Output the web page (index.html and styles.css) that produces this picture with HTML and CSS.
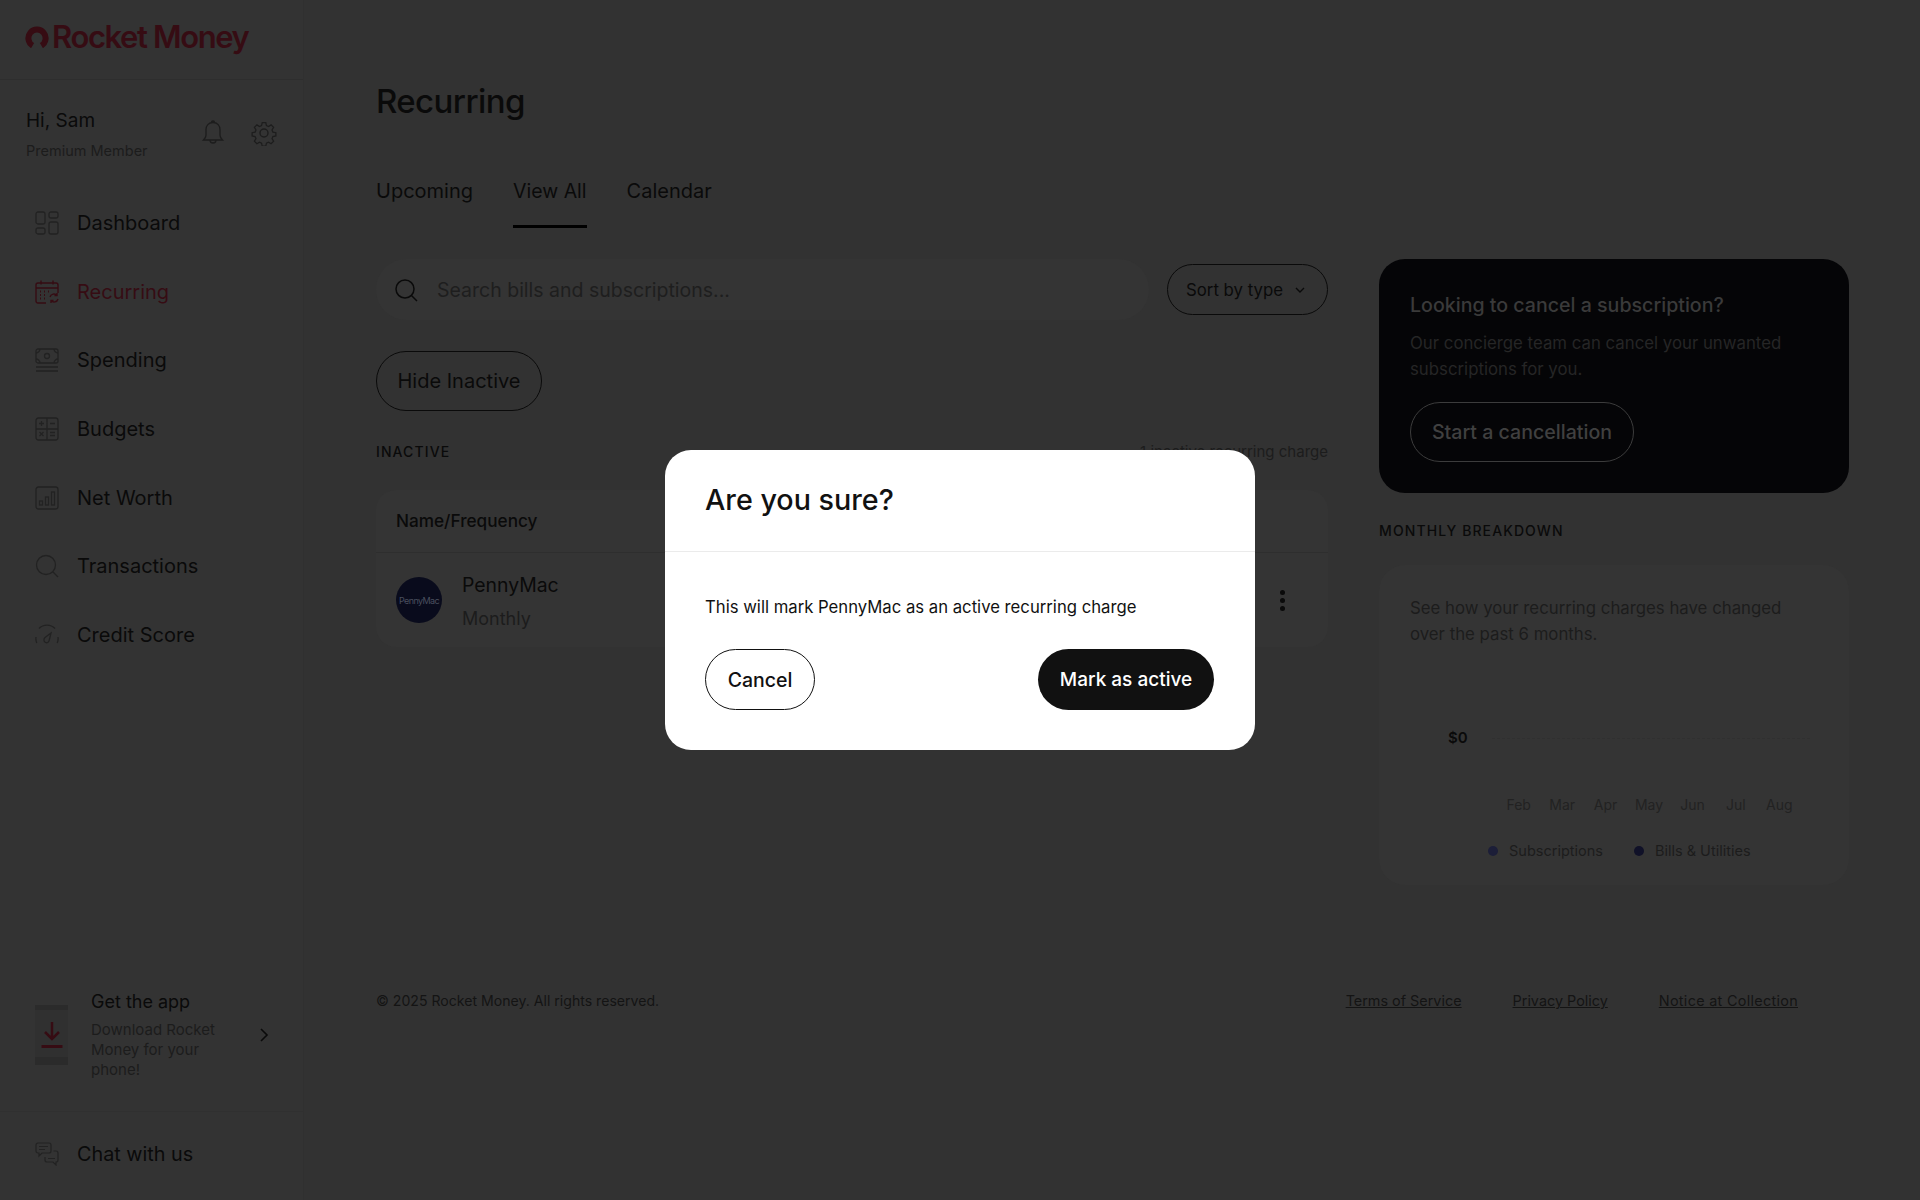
FILE: index.html
```html
<!DOCTYPE html>
<html lang="en">
<head>
    <meta charset="UTF-8">
    <meta name="viewport" content="width=device-width, initial-scale=1.0">
    <title>Recurring - Rocket Money</title>
    <link rel="stylesheet" href="styles.css">
</head>
<body>
    <div class="app">
        <aside class="sidebar">
            <div class="brand">
                <svg class="brand-mark" viewBox="0 0 24 22" width="24" height="22"><path d="M7.6 19.6A8.6 8.6 0 1 1 16.4 19.6" fill="none" stroke="#360c13" stroke-width="6"/></svg>
                <span class="brand-name">Rocket Money</span>
            </div>
            <div class="user">
                <div class="user-info">
                    <div class="user-name">Hi, Sam</div>
                    <div class="user-plan">Premium Member</div>
                </div>
                <svg class="user-icon" viewBox="0 0 24 28" width="26" height="28" fill="none" stroke="#1d1d1d" stroke-width="1.4"><path d="M12 3.5c-4.4 0-7 3.2-7 7.2v5.6c0 2-1.2 3.4-2.5 4.7h19c-1.3-1.3-2.5-2.7-2.5-4.7v-5.6c0-4-2.6-7.2-7-7.2zM10.5 3.5c0-2 3-2 3 0M9 21c0 4 6 4 6 0"/></svg>
                <svg class="user-icon user-gear" viewBox="0 0 26 26" width="26" height="26" fill="none" stroke="#1d1d1d" stroke-width="1.4"><circle cx="13" cy="13" r="4"/><path d="M11 1.500h4l.7 3.300 2.300 1 2.900-1.800 2.800 2.800-1.800 2.900 1 2.300 3.300.7v3.600l-3.300.7-1 2.300 1.800 2.900-2.800 2.800-2.900-1.800-2.300 1-.7 3.300h-4l-.7-3.300-2.300-1-2.900 1.800-2.800-2.800 1.800-2.900-1-2.300-3.300-.7v-3.600l3.300-.7 1-2.300-1.800-2.900 2.800-2.800 2.900 1.800 2.300-1z" transform="translate(1.300 1.300) scale(.9)"/></svg>
            </div>
            <nav class="nav">
                <a class="nav-item">
                    <svg class="nav-icon" viewBox="0 0 24 24" fill="none" stroke="#222" stroke-width="1.3"><rect x="1" y="1" width="9" height="12" rx="2"/><rect x="14" y="1" width="9" height="6" rx="2"/><rect x="1" y="17" width="9" height="6" rx="2"/><rect x="14" y="11" width="9" height="12" rx="2"/></svg>
                    Dashboard
                </a>
                <a class="nav-item nav-item-active">
                    <svg class="nav-icon" viewBox="0 0 24 24" fill="none" stroke="#360c13" stroke-width="1.400"><path d="M11 23H3a2 2 0 0 1-2-2V5a2 2 0 0 1 2-2h18a2 2 0 0 1 2 2v8M1 8h22M6 .5v4M18 .5v4"/><path d="M5 11.500h1M9 11.500h1M13 11.500h1M5 15h1M9 15h1M5 18.500h1M9 18.500h1" stroke-width="1.800"/><path d="M15 17a4 4 0 0 1 7-1.500M23 19a4 4 0 0 1-7 1.500M22 13v2.500h-2.500M16 23v-2.500h2.500"/></svg>
                    Recurring
                </a>
                <a class="nav-item">
                    <svg class="nav-icon" viewBox="0 0 24 24" fill="none" stroke="#222" stroke-width="1.300"><rect x="1" y="1" width="22" height="14" rx="2"/><circle cx="12" cy="8" r="2.500"/><path d="M1 5c2 0 4-2 4-4M23 5c-2 0-4-2-4-4M1 11c2 0 4 2 4 4M23 11c-2 0-4 2-4 4M1 19h22M1 23h22"/></svg>
                    Spending
                </a>
                <a class="nav-item">
                    <svg class="nav-icon" viewBox="0 0 24 24" fill="none" stroke="#222" stroke-width="1.300"><rect x="1" y="1" width="22" height="22" rx="2.500"/><path d="M12 1v22M1 12h22M6.500 4v5M4 6.500h5M15 6.500h5M4.500 15l4 4M8.500 15l-4 4M15 15.500h5M15 18.500h5"/></svg>
                    Budgets
                </a>
                <a class="nav-item">
                    <svg class="nav-icon" viewBox="0 0 24 24" fill="none" stroke="#222" stroke-width="1.300"><rect x="1" y="1" width="22" height="22" rx="2.500"/><rect x="4.500" y="15" width="3" height="4"/><rect x="10.500" y="11" width="3" height="8"/><rect x="16.500" y="6" width="3" height="13"/></svg>
                    Net Worth
                </a>
                <a class="nav-item">
                    <svg class="nav-icon" viewBox="0 0 24 24" fill="none" stroke="#222" stroke-width="1.300"><circle cx="11" cy="11" r="9.500"/><path d="M18 18l5 5"/></svg>
                    Transactions
                </a>
                <a class="nav-item">
                    <svg class="nav-icon" viewBox="0 0 24 24" fill="none" stroke="#222" stroke-width="1.300"><path d="M1.800 20a11 11 0 0 1-.8-6M4 5.500a11 11 0 0 1 16 0M23 14a11 11 0 0 1-.8 6"/><path d="M16 10l-6 4.500c-1.500 1.500-1.500 4 .5 5 2 .8 3.500-.5 3.800-2.500z"/></svg>
                    Credit Score
                </a>
            </nav>
            <div class="get-app">
                <div class="phone">
                    <svg viewBox="0 0 24 28" width="24" height="28" fill="none" stroke="#360c13" stroke-width="2.500"><path d="M12 2v17M5 12l7 7 7-7"/><path d="M1.500 26.500h21" stroke-width="3"/></svg>
                </div>
                <div class="get-app-text">
                    <div class="get-app-title">Get the app</div>
                    <div class="get-app-desc">Download Rocket Money for your phone!</div>
                </div>
                <svg class="get-app-arrow" viewBox="0 0 10 14" width="10" height="14" fill="none" stroke="#0a0a0a" stroke-width="1.600"><path d="M2 1l6 6-6 6"/></svg>
            </div>
            <a class="chat">
                <svg class="nav-icon" viewBox="0 0 24 24" fill="none" stroke="#222" stroke-width="1.200"><path d="M3 1h11a2 2 0 0 1 2 2v6a2 2 0 0 1-2 2H7l-3 3v-3H3a2 2 0 0 1-2-2V3a2 2 0 0 1 2-2zM4 4.500h9M4 7.500h6"/><path d="M18.500 9H21a2 2 0 0 1 2 2v7a2 2 0 0 1-2 2v3l-3-3h-6a2 2 0 0 1-2-2v-3M13 16.500h7"/></svg>
                Chat with us
            </a>
        </aside>

        <main class="main">
            <h1 class="page-title">Recurring</h1>
            <div class="tabs">
                <a class="tab">Upcoming</a>
                <a class="tab tab-active">View All</a>
                <a class="tab">Calendar</a>
            </div>
            <div class="columns">
                <section class="col-left">
                    <div class="toolbar">
                        <div class="search">
                            <svg viewBox="0 0 24 24" width="24" height="24" fill="none" stroke="#0a0a0a" stroke-width="1.500"><circle cx="11" cy="11" r="9"/><path d="M17.500 17.500L23 23"/></svg>
                            <span>Search bills and subscriptions...</span>
                        </div>
                        <button class="sort" type="button">
                            Sort by type
                            <svg viewBox="0 0 10 6" width="10" height="6" fill="none" stroke="#0a0a0a" stroke-width="1.400"><path d="M1 1l4 4 4-4"/></svg>
                        </button>
                    </div>
                    <button class="pill" type="button">Hide Inactive</button>
                    <div class="section-row">
                        <span class="section-label">INACTIVE</span>
                        <span class="section-count">1 inactive recurring charge</span>
                    </div>
                    <div class="table">
                        <div class="table-head">Name/Frequency</div>
                        <div class="table-row">
                            <div class="avatar"><span>PennyMac</span></div>
                            <div class="bill">
                                <div class="bill-name">PennyMac</div>
                                <div class="bill-freq">Monthly</div>
                            </div>
                            <div class="kebab"><i></i><i></i><i></i></div>
                        </div>
                    </div>
                </section>
                <section class="col-right">
                    <div class="promo">
                        <div class="promo-title">Looking to cancel a subscription?</div>
                        <p class="promo-text">Our concierge team can cancel your unwanted subscriptions for you.</p>
                        <button class="promo-btn" type="button">Start a cancellation</button>
                    </div>
                    <div class="section-label breakdown-label">MONTHLY BREAKDOWN</div>
                    <div class="breakdown">
                        <p class="breakdown-text">See how your recurring charges have changed over the past 6 months.</p>
                        <div class="chart-row">
                            <span class="chart-value">$0</span>
                            <span class="chart-line"></span>
                        </div>
                        <div class="months">
                            <span>Feb</span><span>Mar</span><span>Apr</span><span>May</span><span>Jun</span><span>Jul</span><span>Aug</span>
                        </div>
                        <div class="legend">
                            <span class="legend-item"><i class="dot dot-subs"></i>Subscriptions</span>
                            <span class="legend-item"><i class="dot dot-bills"></i>Bills &amp; Utilities</span>
                        </div>
                    </div>
                </section>
            </div>
            <footer class="footer">
                <span class="copyright">&copy; 2025 Rocket Money. All rights reserved.</span>
                <div class="footer-links">
                    <a>Terms of Service</a>
                    <a>Privacy Policy</a>
                    <a class="footer-notice">Notice at Collection</a>
                </div>
            </footer>
        </main>
    </div>

    <div class="backdrop">
        <div class="modal">
            <h2 class="modal-title">Are you sure?</h2>
            <div class="modal-body">
                <p class="modal-text">This will mark PennyMac as an active recurring charge</p>
                <div class="modal-actions">
                    <button class="modal-btn modal-cancel" type="button">Cancel</button>
                    <button class="modal-btn modal-confirm" type="button">Mark as active</button>
                </div>
            </div>
        </div>
    </div>
</body>
</html>
```

FILE: styles.css
```css
* {
    box-sizing: border-box;
}
body {
    margin: 0;
    height: 100vh;
    overflow: hidden;
    background: #323232;
    color: #0a0a0a;
    font-family: Inter, "Liberation Sans", sans-serif;
}
button {
    font-family: inherit;
    background: none;
    cursor: pointer;
}
p, h1, h2 {
    margin: 0;
    font-weight: 400;
}
.app {
    display: flex;
    height: 100vh;
}

/* sidebar */
.sidebar {
    width: 304px;
    flex-shrink: 0;
    display: flex;
    flex-direction: column;
    background: #333;
    border-right: 1px solid #303030;
}
.brand {
    height: 80px;
    display: flex;
    align-items: center;
    gap: 3px;
    padding: 0 0 6px 25px;
    border-bottom: 1px solid #2e2e2e;
}
.brand-name {
    color: #360c13;
    font-size: 31px;
    font-weight: 600;
    letter-spacing: -1.400px;
    white-space: nowrap;
}
.user {
    display: flex;
    align-items: center;
    padding: 29px 26px 0 26px;
}
.user-info {
    flex: 1;
}
.user-name {
    font-size: 19px;
    line-height: 24px;
}
.user-plan {
    font-size: 14.500px;
    line-height: 20px;
    margin-top: 8px;
    color: #1c1c1c;
}
.user-icon {
    margin: 0 0 4px 0;
}
.user-gear {
    margin-left: 25px;
}
.nav {
    margin-top: 28px;
    display: flex;
    flex-direction: column;
}
.nav-item, .chat {
    display: flex;
    align-items: center;
    gap: 18px;
    height: 68.6px;
    padding-left: 35px;
    font-size: 20px;
}
.nav-item-active {
    color: #360c13;
}
.nav-icon {
    width: 24px;
    height: 24px;
    flex-shrink: 0;
}
.get-app {
    margin-top: auto;
    display: flex;
    align-items: center;
    padding: 0 0 31px 35px;
    border-bottom: 1px solid #303030;
}
.phone {
    width: 33px;
    height: 60px;
    margin-right: 23px;
    display: flex;
    align-items: center;
    justify-content: center;
    background: #303030;
    border-top: 5px solid #2b2b2b;
    border-bottom: 8px solid #2b2b2b;
}
.get-app-text {
    width: 135px;
}
.get-app-title {
    font-size: 18px;
    line-height: 24px;
    margin-bottom: 6px;
}
.get-app-desc {
    font-size: 15px;
    line-height: 20px;
    color: #1c1c1c;
}
.get-app-arrow {
    margin-left: 33px;
}
.chat {
    height: 88px;
    padding-bottom: 4px;
    font-size: 19.800px;
}

/* main */
.main {
    flex: 1;
    padding: 79px 0 0 72px;
}
.page-title {
    font-size: 33px;
    line-height: 44px;
    font-weight: 500;
    letter-spacing: -.6px;
}
.tabs {
    display: flex;
    gap: 40px;
    margin-top: 41px;
}
.tab {
    padding: 13px 0 20px;
    font-size: 20px;
    line-height: 28px;
    border-bottom: 3px solid transparent;
}
.tab-active {
    font-size: 19.500px;
    border-bottom-color: #000;
}
.columns {
    display: flex;
    gap: 51px;
    margin-top: 31px;
}
.col-left {
    width: 952px;
}
.col-right {
    width: 470px;
}
.toolbar {
    display: flex;
    align-items: center;
    gap: 18px;
}
.search {
    flex: 1;
    height: 61px;
    display: flex;
    align-items: center;
    gap: 19px;
    padding-left: 18px;
    background: #343434;
    border-radius: 30px;
    color: #1e1e1e;
    font-size: 19.500px;
}
.sort {
    width: 161px;
    height: 51px;
    display: flex;
    align-items: center;
    justify-content: center;
    gap: 12px;
    padding: 0 4px 0 0;
    border: 1.500px solid #0a0a0a;
    border-radius: 26px;
    color: #0a0a0a;
    font-size: 16.800px;
}
.pill {
    display: block;
    margin-top: 31px;
    width: 166px;
    height: 60px;
    border: 1.500px solid #0a0a0a;
    border-radius: 30px;
    color: #0a0a0a;
    font-size: 20px;
}
.section-row {
    display: flex;
    justify-content: space-between;
    margin-top: 31px;
}
.section-label {
    font-size: 14px;
    line-height: 20px;
    font-weight: 500;
    letter-spacing: 1.100px;
}
.section-count {
    font-size: 15px;
    line-height: 20px;
    color: #1c1c1c;
}
.table {
    margin-top: 28px;
    background: #343434;
    border-radius: 20px;
}
.table-head {
    height: 63px;
    padding: 0 0 2px 20px;
    display: flex;
    align-items: center;
    font-size: 17.200px;
    font-weight: 500;
    border-bottom: 1px solid #2e2e2e;
}
.table-row {
    height: 94px;
    display: flex;
    align-items: center;
    padding: 0 43px 0 20px;
}
.avatar {
    width: 46px;
    height: 46px;
    border-radius: 50%;
    background: #090b1c;
    display: flex;
    align-items: center;
    justify-content: center;
    color: #4a4f5e;
    font-size: 9px;
    letter-spacing: -.6px;
}
.bill {
    flex: 1;
    margin: 2px 0 0 20px;
}
.bill-name {
    font-size: 19.400px;
    line-height: 28px;
}
.bill-freq {
    font-size: 18px;
    line-height: 24px;
    margin-top: 8px;
    color: #1c1c1c;
}
.kebab {
    display: flex;
    flex-direction: column;
    gap: 3px;
}
.kebab i {
    width: 5px;
    height: 5px;
    border-radius: 50%;
    background: #0a0a0a;
}
.promo {
    height: 234px;
    padding: 32px 31px;
    background: #050507;
    border-radius: 26px;
}
.promo-title {
    font-size: 19.600px;
    line-height: 28px;
    font-weight: 500;
    color: #3a3a3a;
}
.promo-text {
    margin-top: 11px;
    font-size: 16.800px;
    line-height: 26px;
    color: #262626;
}
.promo-btn {
    display: block;
    margin-top: 20px;
    width: 224px;
    height: 60px;
    border: 1px solid #3c3c3c;
    border-radius: 30px;
    color: #404040;
    font-size: 19.600px;
    font-weight: 500;
}
.breakdown-label {
    margin-top: 28px;
}
.breakdown {
    margin-top: 24px;
    height: 320px;
    padding: 30px 31px 0;
    background: #343434;
    border-radius: 26px;
}
.breakdown-text {
    font-size: 16.800px;
    line-height: 26px;
    color: #1c1c1c;
}
.chart-row {
    display: flex;
    align-items: center;
    margin: 81px -31px 0 38px;
    padding-right: 39px;
}
.chart-value {
    font-size: 15px;
    line-height: 20px;
    font-weight: 600;
}
.chart-line {
    flex: 1;
    margin-left: 24px;
    border-top: 1px dashed #303030;
}
.months {
    display: grid;
    grid-template-columns: repeat(7, 1fr);
    width: 304px;
    margin: 47px 0 0 87px;
    font-size: 14px;
    line-height: 20px;
    text-align: center;
    color: #222;
}
.legend {
    display: flex;
    gap: 31px;
    margin: 26px 0 0 78px;
    font-size: 14.500px;
    line-height: 20px;
    color: #1c1c1c;
}
.legend-item {
    display: flex;
    align-items: center;
    gap: 11px;
}
.dot {
    width: 10px;
    height: 10px;
    border-radius: 50%;
}
.dot-subs {
    background: #1c1e38;
}
.dot-bills {
    background: #101128;
}
.footer {
    display: flex;
    justify-content: space-between;
    margin-top: 106px;
    padding-right: 122px;
    line-height: 20px;
    color: #141414;
}
.copyright {
    font-size: 14.100px;
}
.footer-links {
    display: flex;
    gap: 51px;
    font-size: 14.400px;
}
.footer-links a {
    text-decoration: underline;
}
.footer-links .footer-notice {
    letter-spacing: .3px;
}

/* modal */
.backdrop {
    position: fixed;
    inset: 0;
    display: flex;
    align-items: center;
    justify-content: center;
}
.modal {
    width: 590px;
    height: 300px;
    background: #fff;
    border-radius: 26px;
}
.modal-title {
    height: 102px;
    padding: 28px 40px 0;
    font-size: 28.700px;
    line-height: 44px;
    font-weight: 500;
    color: #111;
    border-bottom: 1px solid #ebebeb;
}
.modal-body {
    padding: 44px 41px 0 40px;
}
.modal-text {
    font-size: 16.700px;
    line-height: 22px;
    color: #111;
}
.modal-actions {
    display: flex;
    justify-content: space-between;
    margin-top: 31px;
}
.modal-btn {
    height: 61px;
    border-radius: 31px;
    font-size: 19.500px;
    font-weight: 500;
    color: #111;
}
.modal-cancel {
    width: 110px;
    border: 1.500px solid #111;
    background: #fff;
}
.modal-confirm {
    width: 176px;
    border: 0;
    background: #111;
    color: #fff;
    font-size: 19px;
}
```
